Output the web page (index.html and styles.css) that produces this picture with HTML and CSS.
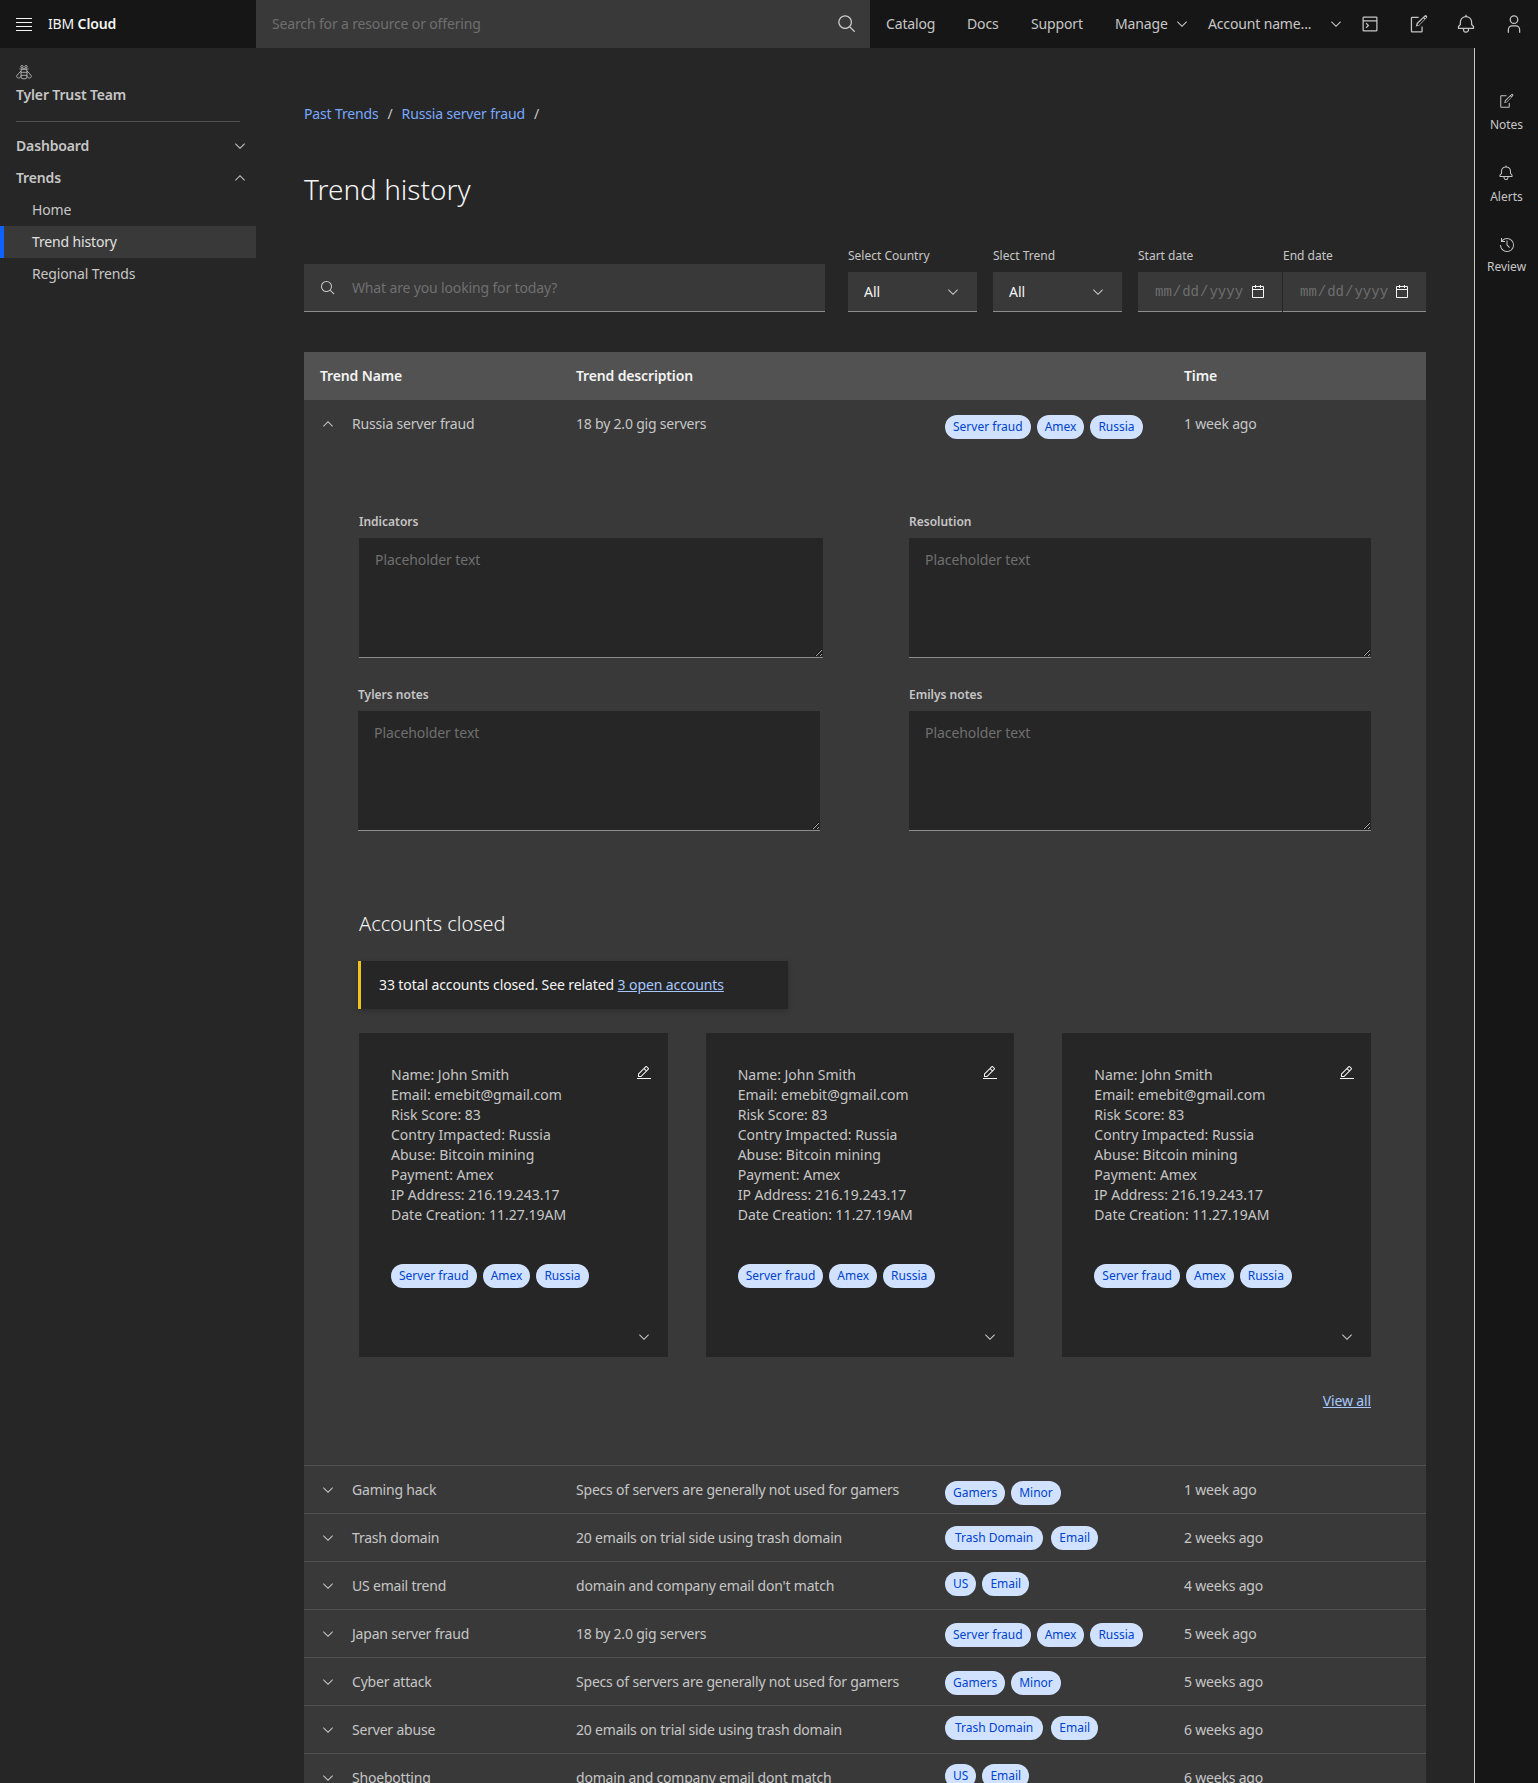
FILE: index.html
```html
<!DOCTYPE html>
<html lang="en">
<head>
<meta charset="utf-8">
<title>Trend history</title>
<link rel="stylesheet" href="styles.css">
</head>
<body>
<svg class="sprite" aria-hidden="true">
  <symbol id="i-search" viewBox="0 0 32 32"><path d="M29 27.5859l-7.5521-7.5521a11.0177 11.0177 0 1 0-1.4141 1.4141L27.5859 29ZM4 13a9 9 0 1 1 9 9A9.01 9.01 0 0 1 4 13Z"/></symbol>
  <symbol id="i-down" viewBox="0 0 32 32"><path d="M16 22L6 12l1.4-1.4 8.6 8.6 8.6-8.6L26 12z"/></symbol>
  <symbol id="i-up" viewBox="0 0 32 32"><path d="M16 10l10 10-1.4 1.4-8.6-8.6-8.6 8.6L6 20z"/></symbol>
  <symbol id="i-bell" viewBox="0 0 32 32"><path d="M28.7071,19.293,26,16.5859V13a10.0136,10.0136,0,0,0-9-9.9492V1H15V3.0508A10.0136,10.0136,0,0,0,6,13v3.5859L3.2929,19.293A1,1,0,0,0,3,20v3a1,1,0,0,0,1,1h7v.7768a5.152,5.152,0,0,0,4.5,5.1987A5.0057,5.0057,0,0,0,21,25V24h7a1,1,0,0,0,1-1V20A1,1,0,0,0,28.7071,19.293ZM19,25a3,3,0,0,1-6,0V24h6Zm8-3H5V20.4141L7.707,17.707A1,1,0,0,0,8,17V13a8,8,0,0,1,16,0v4a1,1,0,0,0,.293.707L27,20.4141Z"/></symbol>
  <symbol id="i-user" viewBox="0 0 32 32"><path d="M16,4a5,5,0,1,1-5,5,5,5,0,0,1,5-5m0-2a7,7,0,1,0,7,7A7,7,0,0,0,16,2Z"/><path d="M26,30H24V25a5,5,0,0,0-5-5H13a5,5,0,0,0-5,5v5H6V25a7,7,0,0,1,7-7h6a7,7,0,0,1,7,7Z"/></symbol>
  <symbol id="i-edit" viewBox="0 0 32 32"><path d="M2 26H30V28H2zM25.4 9c.8-.8.8-2 0-2.8l-3.6-3.6c-.8-.8-2-.8-2.8 0l-15 15V24h6.4L25.4 9zM20.4 4L24 7.6l-3 3L17.4 7 20.4 4zM6 22v-3.6l10-10 3.6 3.6-10 10H6z"/></symbol>
  <symbol id="i-note" viewBox="0 0 32 32"><path d="M6.500 29.500a2 2 0 0 1-2-2v-21a2 2 0 0 1 2-2H17v2H6.500v21h15V20h2v7.500a2 2 0 0 1-2 2z"/><path d="M26.600 2.400a2.200 2.200 0 0 1 3.100 0l.4.400a2.200 2.200 0 0 1 0 3.100L18 18.500l-5.600 1.600 1.600-5.600zM15.800 15.600l-.7 2.500 2.500-.7L26.500 8.500 24.700 6.700zM26.100 5.300l1.800 1.800 .8-.8a.6.6 0 0 0 0-.9l-.9-.9a.6.6 0 0 0-.9 0z"/></symbol>
  <symbol id="i-history" viewBox="0 0 32 32"><path d="M20.59 22L15 16.41V7h2v8.58l5 5.01L20.59 22z"/><path d="M16 2A13.94 13.94 0 0 0 6 6.23V2H4v8h8V8H7.08A12 12 0 1 1 4 16H2A14 14 0 1 0 16 2z"/></symbol>
  <symbol id="i-panel" viewBox="0 0 32 32"><path d="M26 4H6a2 2 0 0 0-2 2v20a2 2 0 0 0 2 2h20a2 2 0 0 0 2-2V6a2 2 0 0 0-2-2zm0 2v4H6V6zM6 26V12h20v14z"/><path d="M10.400 22.600 9 21.200l3-3-3-3 1.400-1.400 4.400 4.400z"/></symbol>
  <symbol id="i-calendar" viewBox="0 0 32 32"><path d="M26,4h-4V2h-2v2h-8V2h-2v2H6C4.900,4,4,4.900,4,6v20c0,1.100,.9,2,2,2h20c1.100,0,2-.9,2-2V6C28,4.900,27.100,4,26,4z M26,26H6V12h20V26z M26,10H6V6h4v2h2V6h8v2h2V6h4V10z"/></symbol>
  <symbol id="i-bee" viewBox="0 0 16 16"><g fill="none" stroke="currentColor" stroke-width=".8"><circle cx="6" cy="2.700" r="1.200"/><circle cx="10" cy="2.700" r="1.200"/><path d="M3.500 5h9"/><rect x="5" y="5" width="6" height="9.800" rx="2"/><path d="M5 8.300h6M5 11.300h6"/><path d="M5 7 1.200 11a1.900 1.900 0 0 0 1.300 3.100C4 14.100 5 13 5 12"/><path d="M11 7l3.800 4a1.900 1.900 0 0 1-1.300 3.100C12 14.100 11 13 11 12"/></g></symbol>
</svg>

<header class="topbar">
  <div class="brand">
    <span class="menu-icon"><i></i><i></i><i></i><i></i></span>
    <span class="brand-name">IBM <b>Cloud</b></span>
  </div>
  <div class="global-search">
    <span>Search for a resource or offering</span>
    <svg class="icon-20"><use href="#i-search"/></svg>
  </div>
  <nav class="top-links">
    <a>Catalog</a><a>Docs</a><a>Support</a>
    <a class="has-caret manage">Manage <svg class="icon-16"><use href="#i-down"/></svg></a>
    <a class="has-caret account">Account name... <svg class="icon-16"><use href="#i-down"/></svg></a>
  </nav>
  <div class="top-icons">
    <svg class="icon-20"><use href="#i-panel"/></svg>
    <svg class="icon-20"><use href="#i-note"/></svg>
    <svg class="icon-20"><use href="#i-bell"/></svg>
    <svg class="icon-20"><use href="#i-user"/></svg>
  </div>
</header>

<div class="shell">
  <aside class="sidenav">
    <div class="team">
      <svg class="icon-16"><use href="#i-bee"/></svg>
      <div class="team-name">Tyler Trust Team</div>
    </div>
    <div class="nav-head">Dashboard <svg class="icon-16"><use href="#i-down"/></svg></div>
    <div class="nav-head">Trends <svg class="icon-16"><use href="#i-up"/></svg></div>
    <a class="nav-item">Home</a>
    <a class="nav-item active">Trend history</a>
    <a class="nav-item">Regional Trends</a>
  </aside>

  <main class="content">
    <div class="crumbs"><a>Past Trends</a><span>/</span><a>Russia server fraud</a><span>/</span></div>
    <h1>Trend history</h1>

    <div class="filters">
      <div class="page-search">
        <svg class="icon-16"><use href="#i-search"/></svg>
        <span>What are you looking for today?</span>
      </div>
      <label class="field field-select">Select Country
        <span class="control"><select><option>All</option></select><svg class="icon-16"><use href="#i-down"/></svg></span>
      </label>
      <label class="field field-select">Slect Trend
        <span class="control"><select><option>All</option></select><svg class="icon-16"><use href="#i-down"/></svg></span>
      </label>
      <div class="dates">
        <label class="field">Start date<span class="control"><input type="date"><svg class="icon-16 cal"><use href="#i-calendar"/></svg></span></label>
        <label class="field">End date<span class="control"><input type="date"><svg class="icon-16 cal"><use href="#i-calendar"/></svg></span></label>
      </div>
    </div>

    <section class="table">
      <div class="thead">
        <div>Trend Name</div><div>Trend description</div><div></div><div>Time</div>
      </div>

      <div class="row row-open">
        <svg class="icon-16"><use href="#i-up"/></svg>
        <div>Russia server fraud</div>
        <div>18 by 2.0 gig servers</div>
        <div class="tags down-3"><span>Server fraud</span><span>Amex</span><span>Russia</span></div>
        <div>1 week ago</div>
      </div>

      <div class="detail">
        <div class="notes">
          <label class="note">Indicators<textarea placeholder="Placeholder text"></textarea></label>
          <label class="note">Resolution<textarea placeholder="Placeholder text"></textarea></label>
          <label class="note note-narrow">Tylers notes<textarea placeholder="Placeholder text"></textarea></label>
          <label class="note">Emilys notes<textarea placeholder="Placeholder text"></textarea></label>
        </div>

        <h2>Accounts closed</h2>
        <div class="notice"><span>33 total accounts closed. See related <a>3 open accounts</a></span></div>

        <div class="cards">
          <article class="card">
            <svg class="icon-16 card-edit"><use href="#i-edit"/></svg>
            <p>Name: John Smith<br>Email: emebit@gmail.com<br>Risk Score: 83<br>Contry Impacted: Russia<br>Abuse: Bitcoin mining<br>Payment: Amex<br>IP Address: 216.19.243.17<br>Date Creation: 11.27.19AM</p>
            <div class="tags"><span>Server fraud</span><span>Amex</span><span>Russia</span></div>
            <svg class="icon-16 card-more"><use href="#i-down"/></svg>
          </article>
          <article class="card">
            <svg class="icon-16 card-edit"><use href="#i-edit"/></svg>
            <p>Name: John Smith<br>Email: emebit@gmail.com<br>Risk Score: 83<br>Contry Impacted: Russia<br>Abuse: Bitcoin mining<br>Payment: Amex<br>IP Address: 216.19.243.17<br>Date Creation: 11.27.19AM</p>
            <div class="tags"><span>Server fraud</span><span>Amex</span><span>Russia</span></div>
            <svg class="icon-16 card-more"><use href="#i-down"/></svg>
          </article>
          <article class="card">
            <svg class="icon-16 card-edit"><use href="#i-edit"/></svg>
            <p>Name: John Smith<br>Email: emebit@gmail.com<br>Risk Score: 83<br>Contry Impacted: Russia<br>Abuse: Bitcoin mining<br>Payment: Amex<br>IP Address: 216.19.243.17<br>Date Creation: 11.27.19AM</p>
            <div class="tags"><span>Server fraud</span><span>Amex</span><span>Russia</span></div>
            <svg class="icon-16 card-more"><use href="#i-down"/></svg>
          </article>
        </div>
        <div class="view-all"><a>View all</a></div>
      </div>

      <div class="row"><svg class="icon-16"><use href="#i-down"/></svg><div>Gaming hack</div><div>Specs of servers are generally not used for gamers</div><div class="tags down-3"><span>Gamers</span><span>Minor</span></div><div>1 week ago</div></div>
      <div class="row"><svg class="icon-16"><use href="#i-down"/></svg><div>Trash domain</div><div>20 emails on trial side using trash domain</div><div class="tags wide"><span>Trash Domain</span><span>Email</span></div><div>2 weeks ago</div></div>
      <div class="row"><svg class="icon-16"><use href="#i-down"/></svg><div>US email trend</div><div>domain and company email don't match</div><div class="tags up-2"><span>US</span><span>Email</span></div><div>4 weeks ago</div></div>
      <div class="row"><svg class="icon-16"><use href="#i-down"/></svg><div>Japan server fraud</div><div>18 by 2.0 gig servers</div><div class="tags down-1"><span>Server fraud</span><span>Amex</span><span>Russia</span></div><div>5 week ago</div></div>
      <div class="row"><svg class="icon-16"><use href="#i-down"/></svg><div>Cyber attack</div><div>Specs of servers are generally not used for gamers</div><div class="tags down-1"><span>Gamers</span><span>Minor</span></div><div>5 weeks ago</div></div>
      <div class="row"><svg class="icon-16"><use href="#i-down"/></svg><div>Server abuse</div><div>20 emails on trial side using trash domain</div><div class="tags wide up-2"><span>Trash Domain</span><span>Email</span></div><div>6 weeks ago</div></div>
      <div class="row"><svg class="icon-16"><use href="#i-down"/></svg><div>Shoebotting</div><div>domain and company email dont match</div><div class="tags up-2"><span>US</span><span>Email</span></div><div>6 weeks ago</div></div>
    </section>
  </main>

  <aside class="rail">
    <a><svg class="icon-16"><use href="#i-note"/></svg>Notes</a>
    <a><svg class="icon-16"><use href="#i-bell"/></svg>Alerts</a>
    <a class="rail-tight"><svg class="icon-16"><use href="#i-history"/></svg>Review</a>
  </aside>
</div>
</body>
</html>
```

FILE: styles.css
```css
* { box-sizing: border-box; }
html, body { margin: 0; height: 1783px; overflow: hidden; }
body {
  background: #262626;
  color: #c6c6c6;
  font-family: "Noto Sans", "Liberation Sans", sans-serif;
  font-size: 14px;
  line-height: 20px;
  letter-spacing: -0.15px;
}
.sprite { display: none; }
svg { fill: currentColor; flex: none; display: block; }
.icon-16 { width: 16px; height: 16px; }
.icon-20 { width: 20px; height: 20px; }

.topbar { display: flex; height: 48px; background: #161616; align-items: stretch; }
.brand { width: 256px; display: flex; align-items: center; padding-left: 16px; gap: 16px; color: #f4f4f4; }
.menu-icon { width: 16px; display: flex; flex-direction: column; gap: 3px; }
.menu-icon i { height: 1px; background: #f4f4f4; display: block; }
.brand b { font-weight: 600; }
.global-search { width: 614px; background: #393939; display: flex; align-items: center; justify-content: space-between; padding: 0 13px 0 16px; color: #6f6f6f; }
.global-search svg { color: #c6c6c6; }
.top-links { display: grid; grid-template-columns: 81px 64px 84px 93px 152px; align-items: center; padding-left: 16px; flex: 1; color: #c6c6c6; }
.has-caret { display: flex; align-items: center; justify-content: space-between; }
.manage { padding-right: 18px; }
.account { padding-right: 16px; }
.top-icons { display: flex; align-items: center; gap: 28px; padding-right: 14px; color: #c6c6c6; }

.shell { display: flex; height: 1735px; }
.sidenav { width: 256px; flex: none; padding-top: 16px; }
.team { margin: 0 16px 8px; padding-bottom: 14px; width: 224px; border-bottom: 1px solid #525252; }
.team-name { font-weight: 600; margin-top: 3px; color: #c6c6c6; line-height: 24px; }
.nav-head { height: 32px; display: flex; align-items: center; justify-content: space-between; padding: 0 8px 0 16px; font-weight: 600; color: #c6c6c6; }
.nav-item { height: 32px; display: flex; align-items: center; padding-left: 32px; color: #c6c6c6; }
.nav-item.active { background: #393939; border-left: 4px solid #0f62fe; padding-left: 28px; color: #e0e0e0; }

.content { flex: 1; min-width: 0; padding: 56px 48px 0; }
.crumbs { display: flex; gap: 9px; height: 20px; color: #c6c6c6; }
.crumbs a { color: #78a9ff; }
h1 { margin: 47px 0 0; height: 77px; font-size: 28px; font-weight: 300; line-height: 36px; color: #f4f4f4; letter-spacing: 0; }
.filters { display: flex; align-items: flex-end; margin-bottom: 40px; }
.page-search { width: 521px; height: 48px; margin-right: 23px; background: #393939; border-bottom: 1px solid #8d8d8d; display: flex; align-items: center; padding-left: 16px; gap: 16px; color: #6f6f6f; }
.page-search svg { color: #c6c6c6; }
.field { display: flex; flex-direction: column; font-size: 12px; line-height: 16px; color: #c6c6c6; gap: 8px; letter-spacing: 0; }
.field-select { width: 129px; margin-right: 16px; }
.control { position: relative; display: block; height: 40px; }
.control svg { position: absolute; right: 16px; top: 12px; pointer-events: none; }
select { width: 100%; height: 40px; appearance: none; border: 0; border-bottom: 1px solid #8d8d8d; background: #393939; color: #f4f4f4; font: inherit; font-size: 14px; padding-left: 16px; border-radius: 0; }
.dates { display: flex; gap: 1px; }
.dates .field { width: 144px; }
.dates .field:last-child { width: 143px; }
.cal { color: #f4f4f4; }
input[type=date] { display: block; height: 40px; width: 100%; border: 0; border-bottom: 1px solid #8d8d8d; background: #393939; color: #6f6f6f; font-family: "Liberation Mono", monospace; font-size: 14px; padding: 1px 16px 0; color-scheme: dark; border-radius: 0; }
input[type=date]::-webkit-calendar-picker-indicator { opacity: 0; }

.table { background: #393939; }
.thead, .row { display: grid; grid-template-columns: 48px 224px 369px 239px 1fr; align-items: center; }
.thead { height: 48px; background: #525252; grid-template-columns: 272px 369px 239px 1fr; font-weight: 600; color: #f4f4f4; }
.thead div:first-child { padding-left: 16px; }
.row { height: 48px; border-top: 1px solid #525252; color: #c6c6c6; letter-spacing: -0.2px; }
.row > svg { margin-left: 16px; }
.row-open { border-top: 0; }
.tags { display: flex; gap: 6px; letter-spacing: 0; }
.tags span { height: 24px; line-height: 24px; padding: 0 8px; border-radius: 12px; background: #d0e2ff; color: #0043ce; font-size: 12px; white-space: nowrap; }
.tags.wide { gap: 8px; }
.tags.wide span:first-child { padding: 0 10px; }
.down-3 { margin-top: 6px; }
.down-1 { margin-top: 2px; }
.up-2 { margin-top: -4px; }

.detail { padding: 66px 55px 0 55px; height: 1017px; }
.notes { display: grid; grid-template-columns: 464px 462px; column-gap: 86px; row-gap: 29px; }
.note { display: flex; flex-direction: column; gap: 8px; font-size: 12px; font-weight: 600; line-height: 16px; color: #c6c6c6; letter-spacing: 0; }
.note-narrow { width: 462px; margin-left: -1px; }
textarea { height: 120px; width: 100%; background: #262626; border: 0; border-bottom: 1px solid #8d8d8d; padding: 12px 16px; color: #f4f4f4; font: 400 14px/20px "Noto Sans", sans-serif; letter-spacing: -0.07px; display: block; border-radius: 0; outline: 0; color-scheme: dark; }
textarea::placeholder { color: #6f6f6f; }
h2 { margin: 79px 0 0; font-size: 20px; font-weight: 300; line-height: 28px; color: #f4f4f4; letter-spacing: 0; }
.notice { width: 430px; height: 48px; margin: 23px 0 24px -1px; background: #262626; border-left: 3px solid #f1c21b; padding-left: 18px; display: flex; align-items: center; color: #f4f4f4; box-shadow: 0 2px 6px rgba(0,0,0,.2); letter-spacing: -0.1px; }
.notice a { color: #a6c8ff; text-decoration: underline; }
.cards { display: flex; gap: 38px; }
.card { position: relative; width: 309px; height: 324px; background: #262626; padding: 32px; letter-spacing: 0; }
.card:nth-child(2) { margin-right: 10px; }
.card p { margin: 0 0 39px; color: #c6c6c6; }
.card-edit { position: absolute; right: 16px; top: 32px; color: #f4f4f4; }
.card-more { position: absolute; right: 16px; top: 296px; }
.view-all { text-align: right; margin-top: 34px; }
.view-all a { color: #a6c8ff; text-decoration: underline; }

.rail { width: 64px; flex: none; background: #161616; border-left: 1px solid #c6c6c6; display: flex; flex-direction: column; align-items: center; padding-top: 45px; font-size: 12px; line-height: 16px; color: #c6c6c6; gap: 32px; letter-spacing: 0; }
.rail a { display: flex; flex-direction: column; align-items: center; gap: 8px; }
.rail .rail-tight { gap: 6px; }
```
